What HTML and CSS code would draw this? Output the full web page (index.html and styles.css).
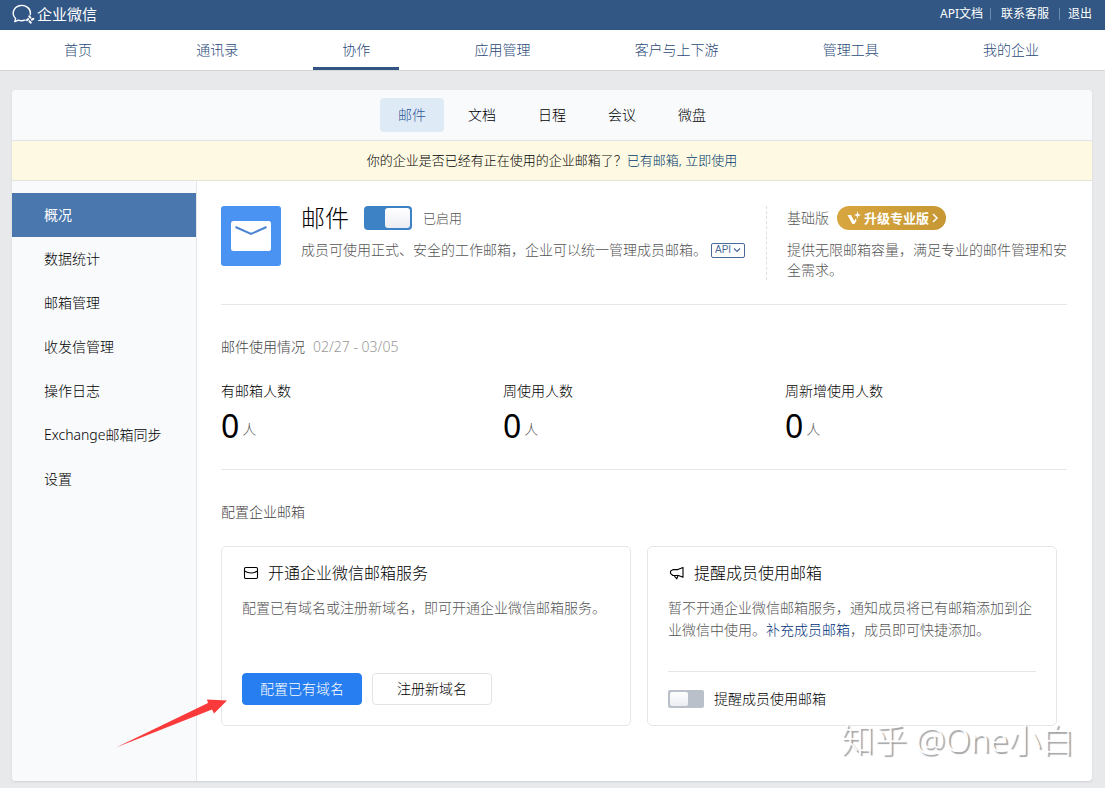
FILE: index.html
```html
<!DOCTYPE html>
<html lang="zh-CN">
<head>
<meta charset="utf-8">
<meta name="viewport" content="width=device-width, initial-scale=1">
<title>企业微信</title>
<link rel="stylesheet" href="styles.css">
</head>
<body>
<header class="topbar">
  <a class="brand" href="#">
    <svg class="brand-icon" viewBox="0 0 24 20" fill="none" stroke="currentColor" stroke-width="1.400" stroke-linecap="round" stroke-linejoin="round">
      <path d="M19.300 10.500A8.600 7.800 0 1 0 4.600 14.600L3.800 17.600L7.400 16.100Q10.500 17.200 14 16.200"/>
      <path d="M18.300 12.300L19.300 13.700M22.300 14.800L20.900 15.700M19.700 18.700L18.500 17.300M15.800 16.200L17.100 15.100" stroke-width="2"/>
    </svg>
    <span>企业微信</span>
  </a>
  <nav class="toplinks"><a href="#">API文档</a><a href="#">联系客服</a><a href="#">退出</a></nav>
</header>
<nav class="mainnav">
  <div class="mainnav-item"><a href="#">首页</a></div>
  <div class="mainnav-item"><a href="#">通讯录</a></div>
  <div class="mainnav-item"><a class="active" href="#">协作</a></div>
  <div class="mainnav-item"><a href="#">应用管理</a></div>
  <div class="mainnav-item"><a href="#">客户与上下游</a></div>
  <div class="mainnav-item"><a href="#">管理工具</a></div>
  <div class="mainnav-item"><a href="#">我的企业</a></div>
</nav>
<div class="panel">
  <nav class="tabs">
    <a class="tab active" href="#">邮件</a>
    <a class="tab" href="#">文档</a>
    <a class="tab" href="#">日程</a>
    <a class="tab" href="#">会议</a>
    <a class="tab" href="#">微盘</a>
  </nav>
  <p class="notice">你的企业是否已经有正在使用的企业邮箱了？<a href="#">已有邮箱, 立即使用</a></p>
  <div class="columns">
    <nav class="sidebar">
      <a class="active" href="#">概况</a>
      <a href="#">数据统计</a>
      <a href="#">邮箱管理</a>
      <a href="#">收发信管理</a>
      <a href="#">操作日志</a>
      <a href="#">Exchange邮箱同步</a>
      <a href="#">设置</a>
    </nav>
    <main class="content">
      <section class="intro">
        <svg class="app-icon" viewBox="0 0 60 60">
          <rect width="60" height="60" rx="3" fill="#4a93f3"/>
          <rect x="10" y="15" width="40" height="30" rx="2.500" fill="#fff"/>
          <path d="M14.500 21L30 28L45.500 21" fill="none" stroke="#4a84d2" stroke-width="2"/>
        </svg>
        <div class="intro-body">
          <div class="intro-head">
            <h1>邮件</h1>
            <input class="switch" type="checkbox" id="mail-on" checked>
            <label for="mail-on">已启用</label>
          </div>
          <div class="intro-desc">
            <span>成员可使用正式、安全的工作邮箱，企业可以统一管理成员邮箱。</span>
            <button class="api" type="button">API
              <svg viewBox="0 0 8 6" fill="none" stroke="currentColor" stroke-width="1.200"><path d="M1 1.500L4 4.500L7 1.500"/></svg>
            </button>
          </div>
        </div>
        <div class="plan">
          <div class="plan-head">
            <span>基础版</span>
            <button class="upgrade" type="button">
              <svg class="spark" viewBox="0 0 14 14" fill="currentColor"><path d="M0.500 4H4L7.200 10L8.600 7.600L9.600 9.600L7.500 13H5.300Z"/><path d="M10.500 0L11.300 3L14 4L11.300 5L10.500 8L9.700 5L7 4L9.700 3Z"/></svg>
              <span>升级专业版</span>
              <svg class="more" viewBox="0 0 6 10" fill="none" stroke="currentColor" stroke-width="1.500"><path d="M1 1L5 5L1 9"/></svg>
            </button>
          </div>
          <p>提供无限邮箱容量，满足专业的邮件管理和安全需求。</p>
        </div>
      </section>
      <section class="usage">
        <h2>邮件使用情况<span class="range">02/27 - 03/05</span></h2>
        <dl class="stats">
          <div><dt>有邮箱人数</dt><dd>0<span>人</span></dd></div>
          <div><dt>周使用人数</dt><dd>0<span>人</span></dd></div>
          <div><dt>周新增使用人数</dt><dd>0<span>人</span></dd></div>
        </dl>
      </section>
      <section class="setup">
        <h2>配置企业邮箱</h2>
        <div class="cards">
          <article class="card">
            <h3>
              <svg viewBox="0 0 16 16" fill="none" stroke="currentColor" stroke-width="1.100" stroke-linejoin="round"><rect x="1.500" y="2.500" width="13" height="11" rx="1.200"/><path d="M1.500 6Q8 10 14.500 6"/></svg>
              开通企业微信邮箱服务
            </h3>
            <p>配置已有域名或注册新域名，即可开通企业微信邮箱服务。</p>
            <div class="actions">
              <button class="btn primary" type="button">配置已有域名</button>
              <button class="btn" type="button">注册新域名</button>
            </div>
          </article>
          <article class="card">
            <h3>
              <svg viewBox="0 0 16 16" fill="none" stroke="currentColor" stroke-width="1.100" stroke-linejoin="round"><path d="M14 2.400V12.300L9.500 10.500H3.900L1.500 8.300V6.300L3.900 4.600H8.800Z"/><path d="M5 10.500L7.800 13.800L9.100 10.500"/></svg>
              提醒成员使用邮箱
            </h3>
            <p>暂不开通企业微信邮箱服务，通知成员将已有邮箱添加到企业微信中使用。<a href="#">补充成员邮箱</a>，成员即可快捷添加。</p>
            <div class="remind">
              <input class="switch small" type="checkbox" id="remind">
              <label for="remind">提醒成员使用邮箱</label>
            </div>
          </article>
        </div>
      </section>
    </main>
  </div>
  <svg class="arrow" viewBox="0 0 112 50"><path d="M0 48.500L92 4L91 0.500L111 1.500L98 14.500L96 10.500Z" fill="#fa3a3a"/></svg>
  <div class="watermark">知乎 @One小白</div>
</div>
</body>
</html>
```

FILE: styles.css
```css
* {
  box-sizing: border-box;
}

body {
  margin: 0;
  min-height: 100vh;
  display: flex;
  flex-direction: column;
  background: #e8e9eb;
  color: #000;
  font: 300 14px/20px "Noto Sans", "Noto Sans CJK SC", sans-serif;
}

h1, h2, h3, p, dl, dd {
  margin: 0;
  font-weight: 300;
}

a {
  color: inherit;
  text-decoration: none;
}

button {
  font: inherit;
  cursor: pointer;
}

.topbar {
  display: flex;
  justify-content: space-between;
  align-items: center;
  height: 30px;
  padding: 0 13px 3px 11px;
  background: #325784;
  color: #fff;
}

.brand {
  display: flex;
  align-items: center;
  gap: 2px;
  font-size: 15px;
  font-weight: 400;
  line-height: 26px;
}

.brand-icon {
  width: 24px;
  height: 20px;
}

.toplinks {
  display: flex;
  font-size: 12px;
  font-weight: 400;
  line-height: 12px;
}

.toplinks a + a {
  margin-left: 7px;
  padding-left: 10px;
  border-left: 1px solid #6b89ae;
}

.toplinks a:last-child {
  padding-left: 8px;
  margin-left: 10px;
}

.mainnav {
  display: flex;
  height: 41px;
  padding: 0 14px 0 12px;
  background: #fff;
  border-bottom: 1px solid #d3d5d8;
}

.mainnav-item {
  flex: 1 1 auto;
  display: flex;
  justify-content: center;
  padding: 0 22px;
}

.mainnav a {
  padding: 0 29px;
  line-height: 40px;
  color: #2b4a78;
  white-space: nowrap;
}

.mainnav .active {
  border-bottom: 3px solid #2f5580;
}

.panel {
  position: relative;
  flex: 1;
  display: flex;
  flex-direction: column;
  margin: 19px 13px 7px 12px;
  background: #fff;
  border-radius: 4px;
  box-shadow: 0 1px 2px #cfd2d6;
}

.tabs {
  display: flex;
  justify-content: center;
  gap: 6px;
  padding: 8px 0;
  background: #f8fafc;
  border-bottom: 1px solid #e1e3e6;
  border-radius: 4px 4px 0 0;
}

.tab {
  padding: 0 18px;
  line-height: 34px;
  border-radius: 4px;
}

.tab.active {
  background: #dfeaf7;
  color: #2f5796;
}

.notice {
  padding: 9px;
  border-bottom: 1px solid #e6e3d8;
  background: #fef9e2;
  font-size: 13px;
  line-height: 21px;
  text-align: center;
}

.notice a {
  color: #003a6c;
}

.columns {
  flex: 1;
  display: flex;
}

.sidebar {
  flex: 0 0 185px;
  padding-top: 12px;
  background: #f8fafc;
  border-right: 1px solid #e4e6e9;
  border-radius: 0 0 0 4px;
}

.sidebar a {
  display: block;
  padding-left: 32px;
  line-height: 44px;
}

.sidebar .active {
  background: #4a77ae;
  color: #fff;
  font-weight: 400;
}

.content {
  flex: 1;
  min-width: 0;
  padding: 25px 25px 55px 24px;
}

.intro {
  display: flex;
  padding-bottom: 24px;
  border-bottom: 1px solid #e4e6e9;
  color: #555;
}

.app-icon {
  flex: none;
  width: 60px;
  height: 60px;
}

.intro-body {
  flex: 1;
  margin-left: 20px;
}

.intro-head {
  display: flex;
  align-items: center;
  height: 24px;
  margin-bottom: 10px;
}

.intro-head h1 {
  margin-right: 15px;
  font-size: 24px;
  line-height: 24px;
  color: #000;
}

.intro-head label {
  margin-left: 11px;
  font-size: 13px;
}

.switch {
  appearance: none;
  display: flex;
  flex: none;
  width: 48px;
  height: 24px;
  margin: 0;
  padding: 2px;
  border-radius: 4px;
  background: #b9c0ca;
}

.switch::before {
  content: "";
  width: 25px;
  border-radius: 3px;
  background: linear-gradient(#fff, #ebedf2);
}

.switch:checked {
  justify-content: flex-end;
  background: #3d82c5;
}

.switch.small {
  width: 36px;
  height: 18px;
  border-radius: 2px;
}

.switch.small::before {
  width: 18px;
  border-radius: 2px;
}

.intro-desc {
  display: flex;
  align-items: center;
  gap: 4px;
}

.api {
  display: flex;
  align-items: center;
  gap: 2px;
  height: 15px;
  padding: 0 3px;
  border: 1px solid #4a6a98;
  border-radius: 2px;
  background: #fff;
  color: #4a6a98;
  font-family: "Liberation Sans", sans-serif;
  font-size: 10px;
  line-height: 12px;
}

.api svg {
  width: 8px;
  height: 6px;
}

.plan {
  flex: 0 0 301px;
  min-height: 74px;
  padding-left: 20px;
  border-left: 1px dashed #dcdee1;
}

.plan-head {
  display: flex;
  align-items: center;
  gap: 8px;
  margin-bottom: 10px;
}

.upgrade {
  display: flex;
  align-items: center;
  gap: 3px;
  height: 24px;
  padding: 0 8px 0 10px;
  border: 0;
  border-radius: 12px;
  background: linear-gradient(90deg, #d8a63f, #c69733);
  color: #fff;
  font-size: 13px;
  font-weight: 700;
}

.spark {
  width: 14px;
  height: 14px;
}

.more {
  width: 6px;
  height: 10px;
}

.usage {
  padding: 32px 0 23px;
  border-bottom: 1px solid #e4e6e9;
}

.usage h2, .setup h2 {
  font-size: 14px;
  line-height: 20px;
  color: #444;
}

.usage .range {
  margin-left: 8px;
  color: #999;
}

.stats {
  display: grid;
  grid-template-columns: repeat(3, 1fr);
  margin-top: 24px;
}

.stats dd {
  display: flex;
  align-items: center;
  height: 40px;
  margin-top: 5px;
  font-size: 32px;
  line-height: 40px;
  font-weight: 400;
}

.stats dd span {
  margin: 6px 0 0 3px;
  font-size: 14px;
  line-height: 20px;
  font-weight: 300;
  color: #555;
}

.setup {
  padding-top: 32px;
}

.cards {
  display: grid;
  grid-template-columns: 1fr 1fr;
  gap: 16px;
  margin: 24px 10px 0 0;
}

.card {
  display: flex;
  flex-direction: column;
  min-height: 180px;
  padding: 14px 20px 15px;
  border: 1px solid #e4e6e9;
  border-radius: 5px;
}

.card h3 {
  display: flex;
  align-items: center;
  gap: 9px;
  margin-left: 1px;
  font-size: 16px;
  line-height: 24px;
}

.card h3 svg {
  width: 16px;
  height: 16px;
}

.card p {
  margin-top: 12px;
  line-height: 22px;
  color: #555;
}

.card p a {
  color: #003078;
}

.actions {
  display: flex;
  gap: 10px;
  margin-top: auto;
  padding-bottom: 5px;
}

.btn {
  width: 120px;
  height: 32px;
  padding: 0;
  border: 1px solid #e1e3e6;
  border-radius: 4px;
  background: #fff;
  color: #000;
}

.btn.primary {
  border-color: #267ef0;
  background: #267ef0;
  color: #fff;
}

.remind {
  display: flex;
  align-items: center;
  gap: 10px;
  margin-top: auto;
  padding: 17px 0 1px;
  border-top: 1px solid #e4e6e9;
}

.arrow {
  position: absolute;
  left: 104px;
  top: 609px;
  width: 112px;
  height: 50px;
  pointer-events: none;
}

.watermark {
  position: absolute;
  right: 18px;
  bottom: 19px;
  color: #fff;
  font-size: 33px;
  line-height: 44px;
  text-shadow: 2px 2px 1px #a0a0a0;
  pointer-events: none;
}
```
